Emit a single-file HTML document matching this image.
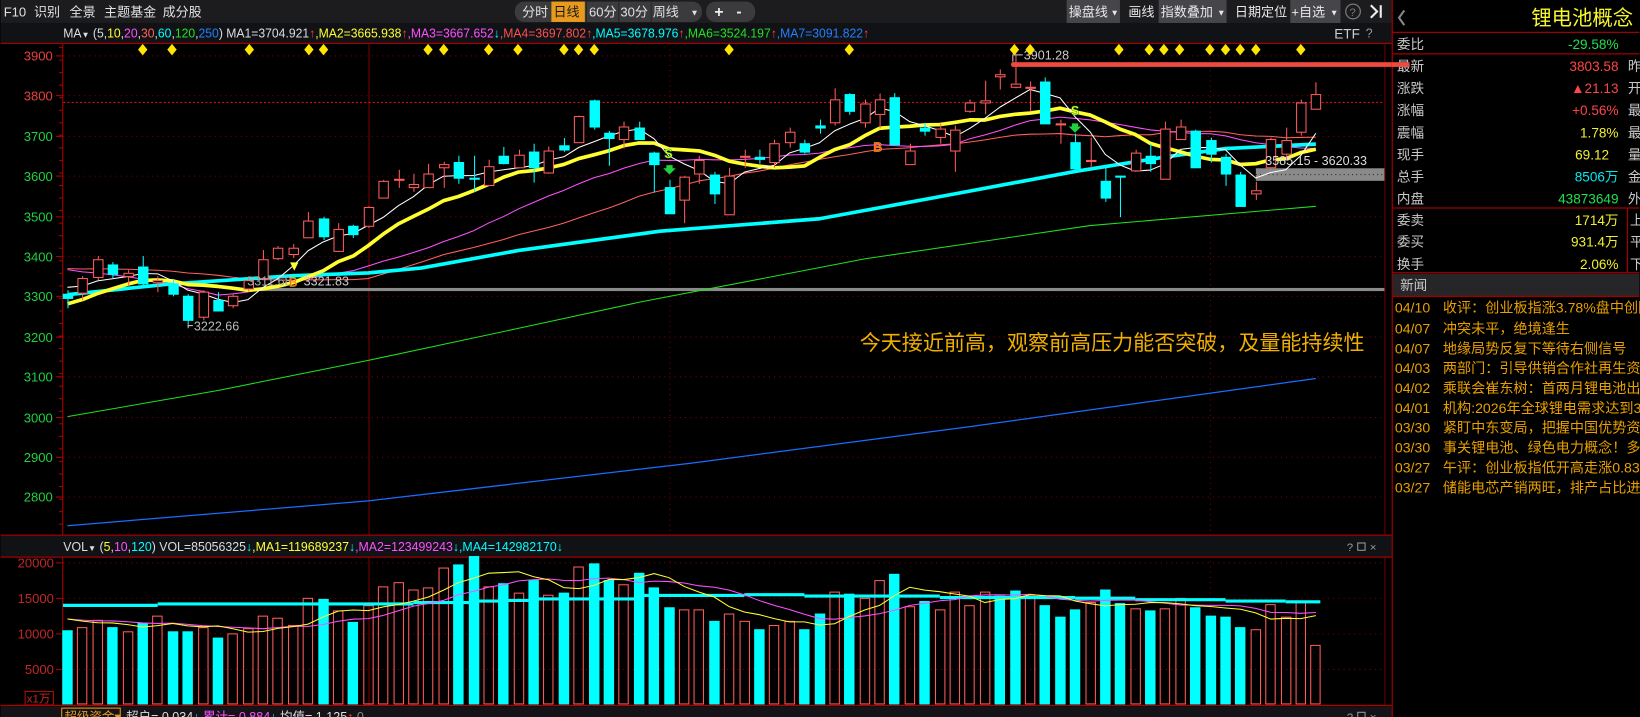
<!DOCTYPE html>
<html><head><meta charset="utf-8">
<style>
html,body{margin:0;padding:0;background:#000;overflow:hidden;}
svg{display:block;font-family:"Liberation Sans","Noto Sans CJK SC",sans-serif;}
</style></head>
<body>
<svg id="s" width="1640" height="717" viewBox="0 0 1568 686" xmlns="http://www.w3.org/2000/svg">
<rect width="1568" height="686" fill="#000"/>
<!-- toolbar -->
<rect x="0" y="0" width="1331" height="22" fill="#1c1c1f"/>
<g font-size="12.5" fill="#e0e0e0">
<text x="3" y="16">F10</text><text x="32" y="16">识别</text><text x="66" y="16">全景</text><text x="99" y="16">主题基金</text><text x="155" y="16">成分股</text>
</g>
<rect x="492" y="1.5" width="179" height="19.5" rx="9" fill="#3b3b3d"/>
<rect x="527" y="1.5" width="32" height="19.5" fill="#e89a1c"/>
<g stroke="#262626"><line x1="560.5" y1="2" x2="560.5" y2="21"/><line x1="591.5" y1="2" x2="591.5" y2="21"/><line x1="622.5" y1="2" x2="622.5" y2="21"/></g>
<g font-size="12.5" fill="#e0e0e0"><text x="499" y="16">分时</text><text x="529" y="16" fill="#1a1a1a">日线</text><text x="563" y="16">60分</text><text x="593" y="16">30分</text><text x="624" y="16">周线</text><text x="660" y="15" font-size="8">▼</text></g>
<rect x="675" y="1.5" width="47" height="19.5" rx="9" fill="#3b3b3d"/>
<text x="683" y="16.5" font-size="15" font-weight="bold" fill="#eee">+</text><text x="704" y="16" font-size="15" font-weight="bold" fill="#eee">-</text>
<rect x="1020" y="0" width="51" height="22" fill="#46464a"/>
<rect x="1108" y="0" width="65" height="22" fill="#46464a"/>
<rect x="1234" y="0" width="48" height="22" fill="#46464a"/>
<g font-size="12.5" fill="#e8e8e8"><text x="1022" y="16">操盘线</text><text x="1062" y="15" font-size="8">▼</text><text x="1079" y="16">画线</text><text x="1110" y="16">指数叠加</text><text x="1164" y="15" font-size="8">▼</text><text x="1181" y="16">日期定位</text><text x="1235" y="16">+自选</text><text x="1272" y="15" font-size="8">▼</text></g>
<circle cx="1294" cy="11" r="7" fill="none" stroke="#777" stroke-width="1.2"/><text x="1290.5" y="15.5" font-size="11" fill="#777">?</text>
<path d="M1311 5 L1317 11 L1311 17" stroke="#eee" stroke-width="2" fill="none"/><line x1="1320.5" y1="5" x2="1320.5" y2="17" stroke="#eee" stroke-width="2"/>
<!-- MA row -->
<rect x="0" y="22" width="1331" height="19.5" fill="#111216"/>
<text x="60" y="36" font-size="12" textLength="771" lengthAdjust="spacingAndGlyphs"><tspan fill="#ddd">MA</tspan><tspan fill="#ddd" font-size="8">▼</tspan><tspan fill="#ddd"> (5,</tspan><tspan fill="#ffff30">10</tspan><tspan fill="#ddd">,</tspan><tspan fill="#ff50ff">20</tspan><tspan fill="#ddd">,</tspan><tspan fill="#ff6060">30</tspan><tspan fill="#ddd">,</tspan><tspan fill="#00ffff">60</tspan><tspan fill="#ddd">,</tspan><tspan fill="#20e020">120</tspan><tspan fill="#ddd">,</tspan><tspan fill="#2080ff">250</tspan><tspan fill="#ddd">) MA1=3704.921</tspan><tspan fill="#ff4040">↑</tspan><tspan fill="#ffff30">,MA2=3665.938</tspan><tspan fill="#ff4040">↑</tspan><tspan fill="#ff50ff">,MA3=3667.652</tspan><tspan fill="#00ffff">↓</tspan><tspan fill="#ff5050">,MA4=3697.802</tspan><tspan fill="#ff4040">↑</tspan><tspan fill="#00ffff">,MA5=3678.976</tspan><tspan fill="#ff4040">↑</tspan><tspan fill="#20e020">,MA6=3524.197</tspan><tspan fill="#ff4040">↑</tspan><tspan fill="#2080ff">,MA7=3091.822</tspan><tspan fill="#ff4040">↑</tspan></text>
<text x="1276" y="37" font-size="13" fill="#ccc">ETF</text><text x="1306" y="36" font-size="12" fill="#999">?</text>
<line x1="0" y1="41.5" x2="1331" y2="41.5" stroke="#a00000" stroke-width="1.2"/>
<!-- grid -->
<g id="grid" stroke="#7a0000" stroke-dasharray="1,4"></g>
<line x1="352.5" y1="42" x2="352.5" y2="675" stroke="#7a0000"/>
<line x1="59.5" y1="42" x2="59.5" y2="675" stroke="#b00000"/>
<line x1="1324.5" y1="42" x2="1324.5" y2="675" stroke="#700000"/>
<line x1="60" y1="98" x2="1324" y2="98" stroke="#d01010" stroke-dasharray="2,2"/>
<g id="ylab" font-size="12.5"></g>
<!-- support line -->
<rect x="232" y="275.5" width="1092" height="3" fill="#8a8a8a"/>
<rect x="1201" y="161" width="123" height="12" fill="#8a8a8a"/>
<line x1="1201" y1="167" x2="1324" y2="167" stroke="#333" stroke-dasharray="1,3"/>
<g id="ma"></g>
<g id="cd"></g>
<rect x="968" y="59.5" width="380" height="4.5" fill="#f04a40"/>
<circle cx="969" cy="61.7" r="2.3" fill="#f04a40"/>
<!-- annotations -->
<path d="M968.5 59 V52.5 H978" stroke="#ccc" fill="none"/>
<text x="979" y="57" font-size="12" fill="#ccc">3901.28</text>
<path d="M179.5 314 V311.5 H184" stroke="#bbb" fill="none"/>
<text x="185" y="316" font-size="12" fill="#bbb">3222.66</text>
<text x="236" y="273" font-size="12" fill="#aaa">3311.68</text>
<text x="276" y="274" font-size="12" fill="#ff4040" stroke="#ffcc00" stroke-width="0.4">B</text>
<text x="290" y="273" font-size="12" fill="#ccc">3321.83</text>
<text x="1210" y="158" font-size="12" fill="#ddd">3585.15 - 3620.33</text>
<path d="M277 251 L285 251 L281 259 Z" fill="#ffff30"/>
<text x="635" y="151" font-size="12" font-weight="bold" fill="#ffff30" stroke="#20a020" stroke-width="0.5">S</text>
<path d="M637 158 h6 v3 h3 l-6 6 l-6 -6 h3 Z" fill="#20d040"/>
<text x="835" y="145" font-size="12" font-weight="bold" fill="#ff4040" stroke="#ffcc00" stroke-width="0.4">B</text>
<text x="1024" y="110" font-size="12" font-weight="bold" fill="#ffff30" stroke="#20a020" stroke-width="0.5">S</text>
<path d="M1025 118 h6 v3 h3 l-6 6 l-6 -6 h3 Z" fill="#20d040"/>
<g id="dia" fill="#ffe600"></g>
<text x="822" y="335" font-size="20" fill="#f0b000" textLength="483" lengthAdjust="spacingAndGlyphs">今天接近前高，观察前高压力能否突破，及量能持续性</text>
<!-- volume header -->
<rect x="0" y="512" width="1331" height="21" fill="#111216"/>
<line x1="0" y1="512" x2="1331" y2="512" stroke="#a00000" stroke-width="1.2"/>
<line x1="0" y1="533" x2="1331" y2="533" stroke="#a00000" stroke-width="1.2"/>
<text x="60" y="527" font-size="12" textLength="478" lengthAdjust="spacingAndGlyphs"><tspan fill="#ddd">VOL</tspan><tspan fill="#ddd" font-size="8">▼</tspan><tspan fill="#ddd"> (</tspan><tspan fill="#ffff30">5</tspan><tspan fill="#ddd">,</tspan><tspan fill="#ff50ff">10</tspan><tspan fill="#ddd">,</tspan><tspan fill="#00ffff">120</tspan><tspan fill="#ddd">) VOL=85056325</tspan><tspan fill="#00ffff">↓</tspan><tspan fill="#ffff30">,MA1=119689237</tspan><tspan fill="#00ffff">↓</tspan><tspan fill="#ff50ff">,MA2=123499243</tspan><tspan fill="#00ffff">↓</tspan><tspan fill="#00ffff">,MA4=142982170↓</tspan></text>
<g font-size="11" fill="#999"><text x="1288" y="527">?</text><rect x="1298.5" y="519.5" width="7" height="7" fill="none" stroke="#999"/><text x="1310" y="527">×</text></g>
<g id="vlab" font-size="12.5" fill="#c02828"></g>
<rect x="23.5" y="661.5" width="27" height="13" fill="none" stroke="#b01010"/>
<text x="25" y="672" font-size="11" fill="#c02828">x1万</text>
<g id="vb"></g>
<g id="vma"></g>
<!-- bottom bar -->
<line x1="0" y1="675" x2="1331" y2="675" stroke="#b00000" stroke-width="1.2"/>
<rect x="0" y="676" width="1331" height="10" fill="#141418"/>
<rect x="58.5" y="677.5" width="56" height="14" fill="none" stroke="#e89a1c"/>
<text x="61" y="690" font-size="12" fill="#e89a1c">超级资金▾</text>
<text x="120" y="690" font-size="12"><tspan fill="#ddd">超户= 0.034</tspan><tspan fill="#00ffff">↓</tspan><tspan fill="#ff50ff"> 累计= 0.884</tspan><tspan fill="#00ffff">↓</tspan><tspan fill="#ddd"> 均值= 1.125</tspan><tspan fill="#ff4040">↑</tspan><tspan fill="#888"> 0</tspan></text>
<g font-size="11" fill="#999"><text x="1288" y="690">?</text><rect x="1298.5" y="681.5" width="7" height="7" fill="none" stroke="#999"/><text x="1310" y="690">×</text></g>
<!-- right panel -->
<rect x="1331" y="0" width="237" height="686" fill="#000"/>
<line x1="1331.5" y1="0" x2="1331.5" y2="686" stroke="#a00000" stroke-width="1.2"/>
<path d="M1343 10 L1338 17 L1343 24" stroke="#888" stroke-width="2" fill="none"/>
<text x="1562" y="24" font-size="19.5" fill="#f5f530" text-anchor="end">锂电池概念</text>
<g stroke="#a00000" stroke-width="1.2"><line x1="1331" y1="31" x2="1568" y2="31"/><line x1="1331" y1="51.6" x2="1568" y2="51.6"/><line x1="1331" y1="199" x2="1568" y2="199"/><line x1="1331" y1="261" x2="1568" y2="261"/><line x1="1556.5" y1="199" x2="1556.5" y2="261"/></g>
<g font-size="13" fill="#c8c8c8">
<text x="1336" y="47">委比</text><text x="1336" y="68">最新</text><text x="1336" y="89">涨跌</text><text x="1336" y="110">涨幅</text><text x="1336" y="131.5">震幅</text><text x="1336" y="152.5">现手</text><text x="1336" y="173.5">总手</text><text x="1336" y="194.5">内盘</text>
<text x="1336" y="215.5">委卖</text><text x="1336" y="236">委买</text><text x="1336" y="257.5">换手</text>
<text x="1557" y="68">昨</text><text x="1557" y="89">开</text><text x="1557" y="110">最</text><text x="1557" y="131.5">最</text><text x="1557" y="152.5">量</text><text x="1557" y="173.5">金</text><text x="1557" y="194.5">外</text>
<text x="1559" y="215.5">上</text><text x="1559" y="236">平</text><text x="1559" y="257.5">下</text>
</g>
<g font-size="13" text-anchor="end">
<text x="1548" y="47" fill="#20e050">-29.58%</text>
<text x="1548" y="68" fill="#ff4545">3803.58</text>
<text x="1548" y="89" fill="#ff4545">▲21.13</text>
<text x="1548" y="110" fill="#ff4545">+0.56%</text>
<text x="1548" y="131.5" fill="#f0f030">1.78%</text>
<text x="1539" y="152.5" fill="#f0f030">69.12</text>
<text x="1548" y="173.5" fill="#00e8f0">8506万</text>
<text x="1548" y="194.5" fill="#20e050">43873649</text>
<text x="1548" y="215.5" fill="#f0f030">1714万</text>
<text x="1548" y="236" fill="#f0f030">931.4万</text>
<text x="1548" y="257.5" fill="#f0f030">2.06%</text>
</g>
<rect x="1332" y="262" width="236" height="21" fill="#262628"/>
<line x1="1332" y1="283.5" x2="1568" y2="283.5" stroke="#a00000" stroke-width="1.2"/>
<text x="1339" y="277.5" font-size="13" fill="#c8c8c8">新闻</text>
<g font-size="13.5" fill="#e8a000">
<text x="1334" y="299">04/10</text><text x="1380" y="299">收评：创业板指涨3.78%盘中创阶段新高</text>
<text x="1334" y="319">04/07</text><text x="1380" y="319">冲突未平，绝境逢生</text>
<text x="1334" y="338">04/07</text><text x="1380" y="338">地缘局势反复下等待右侧信号</text>
<text x="1334" y="357">04/03</text><text x="1380" y="357">两部门：引导供销合作社再生资源</text>
<text x="1334" y="376">04/02</text><text x="1380" y="376">乘联会崔东树：首两月锂电池出口</text>
<text x="1334" y="395">04/01</text><text x="1380" y="395">机构:2026年全球锂电需求达到3</text>
<text x="1334" y="414">03/30</text><text x="1380" y="414">紧盯中东变局，把握中国优势资产</text>
<text x="1334" y="433">03/30</text><text x="1380" y="433">事关锂电池、绿色电力概念！多</text>
<text x="1334" y="452">03/27</text><text x="1380" y="452">午评：创业板指低开高走涨0.83%</text>
<text x="1334" y="471">03/27</text><text x="1380" y="471">储能电芯产销两旺，排产占比进一步</text>
</g>
<rect x="1331" y="59.5" width="17" height="4.5" fill="#f04a40"/>
</svg>
<script>
(function(){
var NS='http://www.w3.org/2000/svg';
function el(t,a,p){var e=document.createElementNS(NS,t);for(var k in a)e.setAttribute(k,a[k]);p.appendChild(e);return e;}
var X=function(i){return 64+14.39*i;}, Y=function(p){return 53+(3900-p)*0.384;};
var UP='#ff5b5b', DN='#00ffff';
var D=[[3305,3295,3315,3270],[3308,3345,3350,3290],[3347,3393,3400,3340],[3380,3355,3385,3345],[3350,3358,3365,3325],[3375,3332,3400,3325],[3335,3340,3350,3310],[3332,3305,3340,3300],[3300,3240,3305,3223],[3249,3312,3315,3240],
[3290,3265,3310,3262],[3278,3300,3305,3270],[3320,3340,3350,3311],[3345,3393,3415,3340],[3395,3422,3425,3390],[3405,3422,3430,3395],[3447,3489,3510,3445],[3495,3450,3498,3440],[3414,3467,3482,3410],[3475,3455,3478,3445],
[3475,3523,3524,3470],[3545,3588,3590,3545],[3590,3594,3615,3570],[3572,3580,3605,3560],[3572,3605,3630,3570],[3622,3628,3635,3570],[3635,3595,3650,3580],[3596,3594,3650,3560],[3578,3625,3640,3575],[3650,3633,3672,3628],
[3622,3653,3665,3620],[3660,3622,3680,3583],[3608,3664,3673,3605],[3675,3665,3694,3660],[3684,3750,3750,3684],[3788,3723,3790,3715],[3707,3695,3712,3625],[3692,3722,3735,3668],[3720,3692,3735,3690],[3658,3630,3660,3558],
[3572,3507,3590,3505],[3540,3597,3600,3482],[3605,3640,3650,3580],[3603,3557,3610,3530],[3505,3601,3620,3505],[3649,3651,3665,3620],[3647,3642,3665,3630],[3634,3680,3690,3620],[3683,3710,3720,3670],[3680,3660,3690,3655],
[3725,3720,3740,3705],[3734,3790,3818,3725],[3803,3763,3806,3752],[3733,3780,3790,3720],[3755,3790,3805,3718],[3797,3678,3806,3677],[3630,3663,3680,3630],[3720,3713,3732,3700],[3697,3718,3730,3680],[3663,3715,3725,3610],
[3761,3782,3790,3757],[3784,3788,3837,3753],[3847,3853,3865,3815],[3823,3830,3901,3818],[3821,3823,3835,3760],[3834,3732,3845,3730],[3728,3732,3740,3680],[3684,3618,3705,3615],[3638,3640,3695,3620],[3588,3545,3625,3535],
[3600,3598,3600,3497],[3614,3657,3665,3612],[3649,3632,3680,3610],[3593,3719,3735,3593],[3692,3723,3740,3690],[3712,3622,3715,3620],[3688,3655,3695,3633],[3647,3605,3655,3575],[3604,3526,3610,3526],[3555,3565,3585,3540],
[3622,3691,3695,3618],[3655,3688,3720,3640],[3709,3783,3790,3700],[3768,3803,3833,3768]];
var V=[-10.4,10.9,11.9,-10.8,10.3,-11.4,12.4,-10.2,-10.2,10.9,-9.4,10.0,10.7,12.4,12.1,11.2,15.0,-14.8,13.2,-11.6,13.9,16.6,17.2,16.1,16.4,19.2,-19.6,-20.8,16.5,-17.0,15.7,-17.4,15.4,-15.7,19.3,-19.8,-17.4,16.8,-18.5,-16.4,-13.7,13.4,13.4,
-11.7,12.7,11.8,-10.6,11.1,11.7,-10.5,-12.7,15.8,-15.6,14.9,17.5,-18.4,13.8,-14.5,13.3,15.9,14.0,15.9,-15.2,-16.0,15.2,-13.9,-12.3,-13.3,14.4,-16.1,-14.2,13.5,-13.2,13.5,14.9,-13.6,-12.5,-12.3,-10.9,10.6,14.1,12.3,14.4,8.4];
var g=document.getElementById('grid'), yl=document.getElementById('ylab');
for(var p=3900;p>=2800;p-=100){var y=Math.round(Y(p))+0.5;el('line',{x1:60,y1:y,x2:1324,y2:y},g);
 el('line',{x1:53,y1:y,x2:59,y2:y,stroke:'#b00000','stroke-dasharray':'none'},g);
 var t=el('text',{x:50,y:y+4.5,'text-anchor':'end',fill:p>3782?'#e84040':'#20d040'},yl);t.textContent=p;}
for(var k=0;k<40;k++){var yy=45+k*12;el('line',{x1:56,y1:yy+0.5,x2:59,y2:yy+0.5,stroke:'#b00000','stroke-dasharray':'none'},g);}
[640,1157].forEach(function(x){el('line',{x1:x+.5,y1:42,x2:x+.5,y2:675},g);});
var vl=document.getElementById('vlab'),VY=function(v){return 674-v*6.82;};
[20,15,10,5].forEach(function(v){var y=Math.round(VY(v))+0.5;el('line',{x1:60,y1:y,x2:1324,y2:y},g);el('line',{x1:53,y1:y,x2:59,y2:y,stroke:'#b00000','stroke-dasharray':'none'},g);var t=el('text',{x:51,y:y+4.5,'text-anchor':'end'},vl);t.textContent=v*1000;});
var dg=document.getElementById('dia');
[136,164,238,295,309,409,424,467,495,539,553,568,697,812,970,985,1070,1099,1113,1128,1157,1172,1186,1201,1244].forEach(function(x){el('path',{d:'M'+x+' 42 L'+(x+4.5)+' 47.5 L'+x+' 53 L'+(x-4.5)+' 47.5 Z'},dg);});
var mg=document.getElementById('ma');
var pre=[];for(var i=0;i<10;i++)pre.push(3374);for(i=0;i<10;i++)pre.push(3451);for(i=0;i<5;i++)pre.push(3240);for(i=0;i<4;i++)pre.push(3329);
var all=pre.concat(D.map(function(d){return d[1];}));
function ma(n,col,w){var pts=[];for(var i=0;i<D.length;i++){var sm=0;for(var j=0;j<n;j++)sm+=all[29+i-j];pts.push(X(i).toFixed(1)+','+Y(sm/n).toFixed(1));}
 el('polyline',{points:pts.join(' '),fill:'none',stroke:col,'stroke-width':w,'stroke-linejoin':'round'},mg);}
function pl(arr,col,w,f){var pts=arr.map(function(a){return X(a[0]).toFixed(1)+','+f(a[1]).toFixed(1);});el('polyline',{points:pts.join(' '),fill:'none',stroke:col,'stroke-width':w,'stroke-linejoin':'round'},mg);}
pl([[0,2728],[20,2790],[41.5,2884],[60,2975],[83,3095]],'#1a6cff',1.2,Y);
pl([[0,3000],[10,3065],[20,3140],[30,3220],[38,3285],[53,3393],[68,3476],[83,3524]],'#20e020',1,Y);
ma(30,'#ff6060',1);ma(20,'#ff50ff',1);
pl([[0,3304],[6.7,3330],[15,3351],[20,3358],[23.5,3370],[30,3414],[39.4,3462],[50,3493],[59,3555],[67,3611],[73,3647],[77,3668],[83,3679]],'#00ffff',3.5,Y);
ma(10,'#ffff30',3.5);ma(5,'#ffffff',1);
var cg=document.getElementById('cd');
D.forEach(function(d,i){var x=Math.round(X(i))+0.5,o=d[0],c=d[1],h=d[2],l=d[3];
 var top=Math.round(Y(Math.max(o,c))),bot=Math.round(Y(Math.min(o,c)));if(bot-top<1)bot=top+1;
 if(c>=o){el('line',{x1:x,y1:Y(h),x2:x,y2:top,stroke:UP},cg);el('line',{x1:x,y1:bot,x2:x,y2:Y(l),stroke:UP},cg);
  el('rect',{x:x-4.5,y:top+0.5,width:9,height:bot-top,fill:'#000',stroke:UP},cg);}
 else{el('line',{x1:x,y1:Y(h),x2:x,y2:Y(l),stroke:DN},cg);el('rect',{x:x-5,y:top,width:10,height:bot-top+1,fill:DN},cg);}
});
var vb=document.getElementById('vb');
V.forEach(function(v,i){var x=Math.round(X(i)),a=Math.abs(v),top=Math.round(VY(a));
 if(v<0)el('rect',{x:x-5,y:top,width:10,height:674-top,fill:DN},vb);
 else el('rect',{x:x-4.5,y:top+0.5,width:9,height:673-top,fill:'none',stroke:UP},vb);});
var vm=document.getElementById('vma');
var va=V.map(Math.abs),vp=[];for(i=0;i<10;i++)vp.push(12.0);var vall=vp.concat(va);
function vma(n,col){var pts=[];for(var i=0;i<va.length;i++){var sm=0;for(var j=0;j<n;j++)sm+=vall[9+i-j];pts.push(X(i).toFixed(1)+','+VY(sm/n).toFixed(1));}el('polyline',{points:pts.join(' '),fill:'none',stroke:col,'stroke-width':1},vm);}
var steps=[[-0.3,13.9],[6,14.1],[23,14.3],[27,14.5],[29,14.6],[31,14.8],[38,15.3],[45,15.4],[49,15.2],[58,15.0],[67,14.9],[71,14.7],[77,14.5],[81,14.4],[83.3,14.4]];
for(i=0;i<steps.length-1;i++){el('line',{x1:X(steps[i][0]),y1:VY(steps[i][1]),x2:X(steps[i+1][0]),y2:VY(steps[i][1]),stroke:'#00ffff','stroke-width':3},vm);}
vma(10,'#ff50ff');vma(5,'#ffff30');
})();
</script>
</body></html>
